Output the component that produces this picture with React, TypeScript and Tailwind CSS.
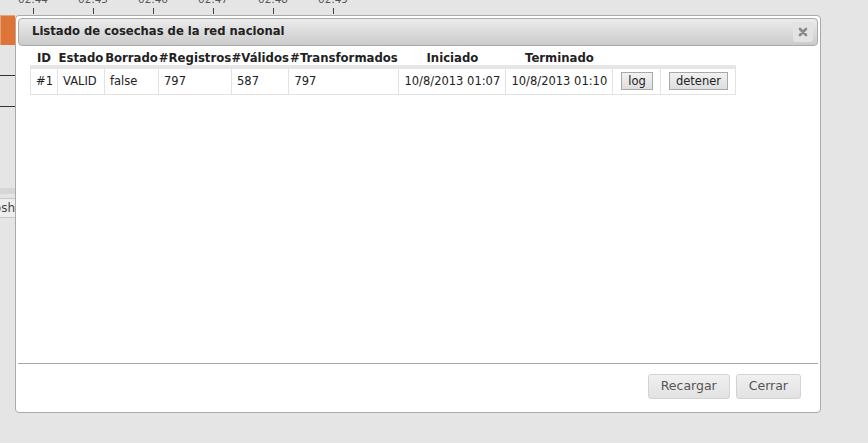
import React from "react";

const font = { fontFamily: '"DejaVu Sans", Verdana, sans-serif' };

const ticks = ["02:44", "02:45", "02:46", "02:47", "02:48", "02:49"];

type Row = {
  id: string;
  estado: string;
  borrado: string;
  registros: number;
  validos: number;
  transformados: number;
  iniciado: string;
  terminado: string;
};

const rows: Row[] = [
  {
    id: "#1",
    estado: "VALID",
    borrado: "false",
    registros: 797,
    validos: 587,
    transformados: 797,
    iniciado: "10/8/2013 01:07",
    terminado: "10/8/2013 01:10",
  },
];

function SmallButton({ children }: { children: React.ReactNode }) {
  return (
    <button className="h-[18px] px-[6px] border border-[#a9a9a9] bg-gradient-to-b from-[#f2f2f2] to-[#dedede] text-[11.5px] leading-none text-[#222]">
      {children}
    </button>
  );
}

function FooterButton({ children }: { children: React.ReactNode }) {
  return (
    <button className="h-[25px] px-[12px] rounded-[3px] border border-[#d3d3d3] bg-gradient-to-b from-[#f0f0f0] to-[#e2e2e2] text-[12.5px] leading-none text-[#555]">
      {children}
    </button>
  );
}

export default function App() {
  return (
    <div className="relative w-[868px] h-[443px] overflow-hidden bg-[#e5e5e5]" style={font}>
      {/* timeline behind the dialog */}
      <div className="flex h-[15px] pl-[3px]">
        {ticks.map((t) => (
          <div key={t} className="w-[60px] flex flex-col items-center">
            <div className="h-[8px] text-[10.4px] leading-[11px] text-[#555] -translate-y-[6px]">{t}</div>
            <div className="h-[6px] w-px bg-[#444]" />
          </div>
        ))}
      </div>

      {/* left page strip behind the dialog */}
      <div className="w-[15px] flex flex-col">
        <div className="h-[30px] bg-[#dc7537] border-t border-l border-[#eba273]" />
        <div className="h-[31px] border-b border-[#333]" />
        <div className="h-[31px] border-b border-[#333]" />
        <div className="h-[81px]" />
        <div className="h-[6px] bg-[#d6d6d6]" />
        <div className="h-[4px]" />
        <div className="h-[20px] flex justify-end items-center overflow-hidden border-y border-[#c8c8c8] bg-[#eeeeee]">
          <span className="text-[12px] text-[#444] whitespace-nowrap">psh</span>
        </div>
      </div>

      {/* dialog */}
      <div className="absolute left-[15px] top-[15px] w-[806px] h-[398px] rounded-[4px] border border-[#aaaaaa] bg-white p-[2px] flex flex-col">
        <div className="h-[28px] flex items-center justify-between rounded-[4px] border border-[#aaaaaa] bg-gradient-to-b from-[#ececec] to-[#cbcbcb] pl-[13px] pr-[4px]">
          <span className="text-[11.6px] font-bold text-[#222]">Listado de cosechas de la red nacional</span>
          <div className="w-[20px] h-[20px] rounded-[3px] bg-[#e3e3e3] flex items-center justify-center">
            <svg width="10" height="10" viewBox="0 0 10 10">
              <path d="M2 2 L8 8 M8 2 L2 8" stroke="#888" strokeWidth="2.6" strokeLinecap="round" />
            </svg>
          </div>
        </div>

        <div className="flex-1 pl-[12px] pt-[5px]">
          <table className="table-fixed border-collapse text-[11.5px] text-[#222]">
            <colgroup>
              <col className="w-[27px]" />
              <col className="w-[47px]" />
              <col className="w-[54px]" />
              <col className="w-[73px]" />
              <col className="w-[57px]" />
              <col className="w-[110px]" />
              <col className="w-[107px]" />
              <col className="w-[107px]" />
              <col className="w-[48px]" />
              <col className="w-[75px]" />
            </colgroup>
            <thead>
              <tr className="h-[16px]">
                {["ID", "Estado", "Borrado", "#Registros", "#Válidos", "#Transformados", "Iniciado", "Terminado", "", ""].map((h, i) => (
                  <th key={i} className="p-0 font-bold text-[11.7px] text-center whitespace-nowrap align-bottom leading-[14px]">
                    {h}
                  </th>
                ))}
              </tr>
            </thead>
            <tbody className="border-t-[4px] border-[#e6e6e6]">
              {rows.map((r) => (
                <tr key={r.id} className="h-[27px]">
                  <td className="border border-[#e3e3e3] pl-[5px]">{r.id}</td>
                  <td className="border border-[#e3e3e3] pl-[5px]">{r.estado}</td>
                  <td className="border border-[#e3e3e3] pl-[5px]">{r.borrado}</td>
                  <td className="border border-[#e3e3e3] pl-[5px]">{r.registros}</td>
                  <td className="border border-[#e3e3e3] pl-[5px]">{r.validos}</td>
                  <td className="border border-[#e3e3e3] pl-[5px]">{r.transformados}</td>
                  <td className="border border-[#e3e3e3] pl-[5px] whitespace-nowrap">{r.iniciado}</td>
                  <td className="border border-[#e3e3e3] pl-[5px] whitespace-nowrap">{r.terminado}</td>
                  <td className="border border-[#e3e3e3] text-center">
                    <SmallButton>log</SmallButton>
                  </td>
                  <td className="border border-[#e3e3e3] text-center">
                    <SmallButton>detener</SmallButton>
                  </td>
                </tr>
              ))}
            </tbody>
          </table>
        </div>

        <div className="h-[47px] border-t border-[#aaaaaa] flex items-start justify-end gap-[6px] pt-[10px] pr-[17px]">
          <FooterButton>Recargar</FooterButton>
          <FooterButton>Cerrar</FooterButton>
        </div>
      </div>
    </div>
  );
}
